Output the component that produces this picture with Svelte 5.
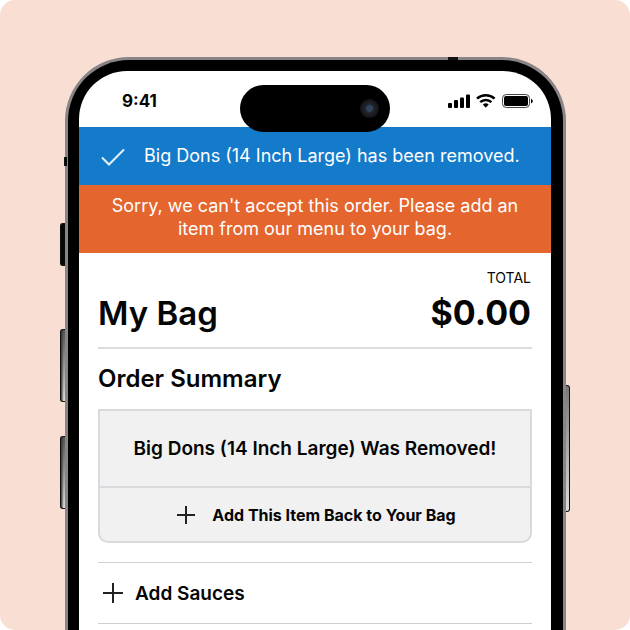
<script>
  const item = 'Big Dons (14 Inch Large)';
  const total = '$0.00';
</script>

<div class="page">
  <div class="phone">
    <span class="side mute"></span>
    <span class="side action"></span>
    <span class="side metal vol-up"></span>
    <span class="side metal vol-down"></span>
    <span class="side metal power"></span>
    <span class="antenna"></span>

    <main class="screen">
      <div class="status">
        <time>9:41</time>
        <div class="island"><span class="lens"></span></div>
        <svg class="signals" width="86" height="16" viewBox="0 0 86 16" aria-hidden="true">
          <rect x="0" y="10" width="4" height="5" rx="1" />
          <rect x="6" y="7" width="4" height="8" rx="1" />
          <rect x="12" y="4.500" width="4" height="10.500" rx="1" />
          <rect x="18" y="1.500" width="4" height="13.500" rx="1" />
          <g fill="none" stroke="#000" stroke-width="2.500">
            <path d="M29 5.700a13 13 0 0 1 17.600 0" />
            <path d="M32.200 9.200a8.200 8.200 0 0 1 11.200 0" />
          </g>
          <path d="M34.900 11.600a4.400 4.400 0 0 1 5.800 0L37.800 14.700z" />
          <rect x="54.500" y="1.500" width="27" height="13" rx="3.800" fill="none" stroke="#444" />
          <rect x="56" y="3" width="24" height="10" rx="2" />
          <path d="M83 5.800v4.600q1.800-.7 1.800-2.300T83 5.800z" />
        </svg>
      </div>

      <div class="notice removed" role="status">
        <svg class="check" width="24" height="18" viewBox="0 0 24 18" aria-hidden="true">
          <path d="M1 9.500L8 16.500L23 1.500" />
        </svg>
        <span>{item} has been removed.</span>
      </div>
      <div class="notice error" role="alert">
        Sorry, we can't accept this order. Please add an<br />item from our menu to your bag.
      </div>

      <div class="content">
        <header>
          <h1>My Bag</h1>
          <div class="total">
            <span>TOTAL</span>
            <strong>{total}</strong>
          </div>
        </header>

        <section>
          <h2>Order Summary</h2>
          <div class="card">
            <p>{item} Was Removed!</p>
            <button class="restore">
              <svg width="18" height="18" viewBox="0 0 18 18" aria-hidden="true">
                <path d="M9 0v18M0 9h18" />
              </svg>
              Add This Item Back to Your Bag
            </button>
          </div>
        </section>

        <button class="sauces">
          <svg width="20" height="20" viewBox="0 0 20 20" aria-hidden="true">
            <path d="M10 0v20M0 10h20" />
          </svg>
          Add Sauces
        </button>
      </div>
    </main>
  </div>
</div>

<style>
  :global(body) {
    margin: 0;
    background: #fff;
  }
  .page {
    box-sizing: border-box;
    display: flex;
    min-height: 100vh;
    padding: 57px 64px 0 65px;
    border-radius: 15px;
    background: #f9dfd3;
    color: #050505;
    font-family: Inter, "Liberation Sans", sans-serif;
  }
  .phone {
    position: relative;
    display: flex;
    flex: 1;
    box-sizing: border-box;
    min-width: 0;
    padding: 11px 12px 0 11px;
    border: solid #898486;
    border-width: 3px 3px 0;
    border-radius: 64px 64px 0 0;
    background: #000;
  }
  .screen {
    flex: 1;
    min-width: 0;
    border-radius: 48px 48px 0 0;
    background: #fff;
  }
  .side {
    position: absolute;
    box-sizing: border-box;
    left: -8px;
    width: 5px;
    border: 1px solid #111;
    border-right: 0;
    border-radius: 3px 0 0 3px;
    background: #080808;
  }
  .metal {
    background: linear-gradient(90deg, #333, transparent 70%), linear-gradient(#555, #ddd);
  }
  .mute {
    top: 97px;
    left: -4px;
    width: 3px;
    height: 9px;
    border-radius: 0;
  }
  .action {
    top: 163px;
    height: 43px;
  }
  .vol-up {
    top: 269px;
    height: 73px;
  }
  .vol-down {
    top: 376px;
    height: 73px;
  }
  .power {
    top: 325px;
    right: -7px;
    left: auto;
    width: 4px;
    height: 127px;
    border: 1px solid #111;
    border-left: 0;
    border-radius: 0 3px 3px 0;
    background: linear-gradient(#777, #ddd);
  }
  .antenna {
    position: absolute;
    top: -3px;
    right: 105px;
    width: 10px;
    height: 3px;
    background: #111;
  }
  .status {
    position: relative;
    display: flex;
    justify-content: space-between;
    align-items: center;
    box-sizing: border-box;
    height: 56px;
    padding: 4px 17px 0 43px;
  }
  time {
    font-size: 17px;
    font-weight: 700;
  }
  .island {
    position: absolute;
    top: 14px;
    left: 50%;
    display: flex;
    justify-content: flex-end;
    align-items: center;
    box-sizing: border-box;
    width: 150px;
    height: 47px;
    margin-left: -75px;
    padding-right: 11px;
    border-radius: 24px;
    background: #000;
  }
  .lens {
    width: 19px;
    height: 19px;
    border-radius: 50%;
    background: radial-gradient(circle, #2f4459 0 3px, #1f2830 4px, #1b1b20 7px, #141417 9px);
  }
  svg {
    flex: none;
  }
  svg path {
    stroke-linecap: butt;
  }
  .notice {
    color: #fff;
    font-size: 18px;
    line-height: 23px;
  }
  .removed {
    display: flex;
    align-items: center;
    gap: 19px;
    box-sizing: border-box;
    height: 58px;
    padding: 0 20px 2px 22px;
    background: #147aca;
    white-space: nowrap;
  }
  .check {
    margin-top: 4px;
    fill: none;
    stroke: #e4f1fb;
    stroke-width: 2;
  }
  .error {
    padding: 9px 10px 13px;
    background: #e4652e;
    text-align: center;
    white-space: nowrap;
  }
  .content {
    padding: 0 19px;
  }
  header {
    display: flex;
    justify-content: space-between;
    align-items: flex-end;
    padding: 16px 1px 14px 0;
    border-bottom: 2px solid #dcdcde;
  }
  h1,
  .total strong {
    margin: 0;
    font-weight: 600;
    line-height: 40px;
  }
  h1 {
    font-size: 33px;
  }
  .total {
    display: flex;
    flex-direction: column;
    align-items: flex-end;
  }
  .total span {
    font-size: 14px;
    line-height: 18px;
  }
  .total strong {
    margin-top: 6px;
    font-size: 34px;
    font-weight: 700;
  }
  h2 {
    margin: 0;
    padding: 15px 0;
    font-size: 24px;
    font-weight: 600;
    line-height: 30px;
  }
  .card {
    border: 2px solid #d8dade;
    border-radius: 0 0 10px 10px;
    background: #f1f1f1;
  }
  .card p {
    margin: 0;
    padding: 25px 0 24px;
    border-bottom: 2px solid #d8dade;
    font-size: 19px;
    font-weight: 600;
    line-height: 26px;
    text-align: center;
  }
  button {
    display: flex;
    align-items: center;
    width: 100%;
    border: 0;
    background: none;
    color: inherit;
    font-family: inherit;
    font-weight: 600;
    white-space: nowrap;
  }
  button path {
    fill: none;
    stroke: #222;
    stroke-width: 2;
  }
  .restore {
    justify-content: center;
    gap: 17px;
    height: 53px;
    padding: 0 0 0 3px;
    font-size: 16px;
    font-weight: 700;
  }
  .sauces {
    gap: 12px;
    height: 62px;
    margin-top: 19px;
    padding: 0 0 0 5px;
    border: solid #cfcfd1;
    border-width: 1px 0;
    font-size: 19px;
  }
</style>
